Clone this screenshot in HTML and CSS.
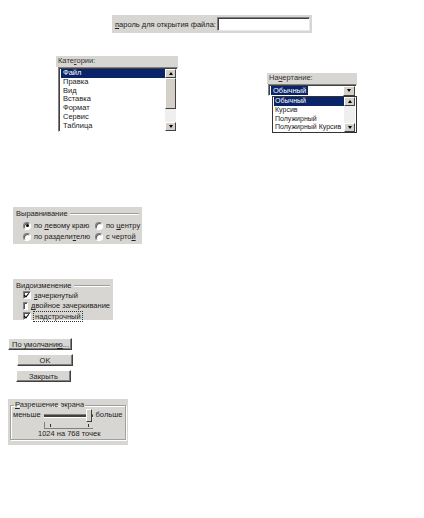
FILE: index.html
```html
<!DOCTYPE html>
<html>
<head>
    <title>Параметры</title>
    <meta charset="UTF-8">
    <link rel="stylesheet" href="styles.css">
</head>
<body>
    <!-- пароль -->
    <div class="pass-bar">
        <span class="lbl"><u>п</u>ароль для открытия файла:</span>
        <span class="field"></span>
    </div>

    <div class="lists">
        <!-- категории -->
        <div class="cat">
            <div class="cap">Кате<u>г</u>ории:</div>
            <div class="listbox">
                <ul class="items">
                    <li class="sel">Файл</li>
                    <li>Правка</li>
                    <li>Вид</li>
                    <li>Вставка</li>
                    <li>Формат</li>
                    <li>Сервис</li>
                    <li>Таблица</li>
                </ul>
                <div class="vscroll">
                    <span class="sbtn"><i class="tri up"></i></span>
                    <span class="thumb"></span>
                    <span class="track"></span>
                    <span class="sbtn"><i class="tri down"></i></span>
                </div>
            </div>
        </div>

        <!-- начертание -->
        <div class="font-style">
            <div class="cap">На<u>ч</u>ертание:</div>
            <div class="combo">
                <span class="combo-text">Обычный</span>
                <span class="sbtn combo-btn"><i class="tri down"></i></span>
            </div>
            <div class="drop">
                <ul class="items">
                    <li class="sel">Обычный</li>
                    <li>Курсив</li>
                    <li>Полужирный</li>
                    <li>Полужирный Курсив</li>
                </ul>
                <div class="vscroll">
                    <span class="sbtn"><i class="tri up"></i></span>
                    <span class="track"></span>
                    <span class="sbtn"><i class="tri down"></i></span>
                </div>
            </div>
        </div>
    </div>

    <!-- выравнивание -->
    <div class="group align">
        <div class="group-title"><span>Выравнивание</span><i class="rule"></i></div>
        <div class="radios">
            <label class="opt"><i class="radio on"></i><span>по <u>л</u>евому краю</span></label>
            <label class="opt"><i class="radio"></i><span>по <u>ц</u>ентру</span></label>
            <label class="opt"><i class="radio"></i><span>по раздели<u>т</u>елю</span></label>
            <label class="opt"><i class="radio"></i><span>с черто<u>й</u></span></label>
        </div>
    </div>

    <!-- видоизменение -->
    <div class="group effects">
        <div class="group-title"><span>Видоизменение</span><i class="rule"></i></div>
        <label class="opt"><i class="check on"></i><span><u>з</u>ачеркнутый</span></label>
        <label class="opt"><i class="check"></i><span><u>д</u>войное зачеркивание</span></label>
        <label class="opt"><i class="check on"></i><span class="focus">надстрочный</span></label>
    </div>

    <!-- кнопки -->
    <div class="buttons">
        <button class="btn btn-default">По умолчани<u>ю</u>...</button>
        <button class="btn btn-ok">OK</button>
        <button class="btn btn-close">Закрыть</button>
    </div>

    <!-- разрешение экрана -->
    <div class="res-panel">
        <fieldset class="res">
            <legend><u>Р</u>азрешение экрана</legend>
            <div class="slider-row">
                <span>меньше</span>
                <div class="slider">
                    <i class="slot"></i>
                    <i class="knob"></i>
                    <div class="ticks"><i></i><i></i></div>
                </div>
                <span>больше</span>
            </div>
            <div class="res-text">1024 на 768 точек</div>
        </fieldset>
    </div>
</body>
</html>
```

FILE: styles.css
```css
body {
    margin: 0;
    background: #fff;
    font-family: "Liberation Sans", Arial, sans-serif;
    font-size: 7.5px;
    color: #222;
    white-space: nowrap;
}

u { text-decoration: underline; }

ul {
    margin: 0;
    padding: 0;
    list-style: none;
}

/* общие детали */
.sbtn {
    display: flex;
    align-items: center;
    justify-content: center;
    box-sizing: border-box;
    width: 11px;
    height: 9px;
    background: #d4d0c8;
    border: 1px solid;
    border-color: #fff #404040 #404040 #fff;
}

.tri {
    width: 0;
    height: 0;
    border-left: 2.5px solid transparent;
    border-right: 2.5px solid transparent;
}

.tri.up { border-bottom: 3px solid #000; }
.tri.down { border-top: 3px solid #000; }

/* пароль */
.pass-bar {
    display: flex;
    align-items: center;
    margin: 15px 0 0 112px;
    width: 200px;
    height: 18px;
    background: #d8d6d2;
}

.pass-bar .lbl {
    margin-left: 3px;
    width: 102px;
}

.field {
    box-sizing: border-box;
    width: 93px;
    height: 14px;
    background: #fff;
    border: 1px solid;
    border-color: #808080 #e8e8e8 #e8e8e8 #808080;
    box-shadow: inset 1px 1px #404040;
}

/* списки */
.lists {
    display: flex;
    align-items: flex-start;
    margin-top: 23px;
}

.cap {
    height: 11px;
    line-height: 10px;
    padding-left: 2px;
    background: #d8d6d2;
    color: #333;
}

.cat {
    margin-left: 56px;
    width: 122px;
}

.listbox {
    display: flex;
    box-sizing: border-box;
    margin-left: 2px;
    width: 120px;
    height: 65px;
    background: #fff;
    border: 1px solid;
    border-color: #808080 #fff #fff #808080;
    box-shadow: inset 1px 1px #404040;
    padding: 1px 1px 0 2px;
}

.items {
    flex: 1;
    overflow: hidden;
}

.items li {
    height: 8.8px;
    line-height: 8.8px;
    padding-left: 2px;
}

.items li.sel {
    background: #0a246a;
    color: #fff;
}

.vscroll {
    display: flex;
    flex-direction: column;
    width: 11px;
    flex-shrink: 0;
}

.vscroll .track {
    flex: 1;
    background: #efefef;
}

.vscroll .thumb {
    box-sizing: border-box;
    height: 31px;
    background: #d4d0c8;
    border: 1px solid;
    border-color: #fff #404040 #404040 #fff;
}

.font-style {
    margin: 17px 0 0 89px;
    width: 90px;
}

.combo {
    display: flex;
    align-items: center;
    justify-content: space-between;
    box-sizing: border-box;
    margin-left: 1px;
    height: 12px;
    background: #fff;
    border: 1px solid;
    border-color: #808080 #fff #fff #808080;
    box-shadow: inset 1px 1px #404040;
    padding: 1px 1px 0 2px;
}

.combo-text {
    background: #0a246a;
    color: #fff;
    padding: 0 2px;
    line-height: 9px;
}

.combo-btn {
    height: 10px;
    width: 12px;
}

.drop {
    display: flex;
    box-sizing: border-box;
    margin-left: 5px;
    height: 37px;
    background: #fff;
    border: 1px solid #333;
    padding: 0 1px 0 1px;
}

.drop .items li {
    height: 8.75px;
    line-height: 8.75px;
    padding-left: 1px;
    font-size: 7px;
}

/* группы */
.group {
    box-sizing: border-box;
    margin-left: 13px;
    background: #d8d6d2;
    padding: 2px 3px 0 3px;
}

.group-title {
    display: flex;
    align-items: center;
    height: 9px;
    line-height: 9px;
}

.group-title .rule {
    flex: 1;
    margin-left: 2px;
    height: 0;
    border-top: 1px solid #a0a0a0;
    border-bottom: 1px solid #fff;
}

.opt {
    display: flex;
    align-items: center;
    height: 11px;
}

.align {
    margin-top: 74px;
    width: 129px;
    height: 37px;
}

.radios {
    display: grid;
    grid-template-columns: 72px auto;
    margin: 2px 0 0 7px;
}

.radio {
    box-sizing: border-box;
    width: 8px;
    height: 8px;
    margin-right: 3px;
    border-radius: 50%;
    background: #fff;
    border: 1px solid;
    border-color: #808080 #fff #fff #808080;
    box-shadow: inset 1px 1px #555;
    position: relative;
}

.radio.on::after {
    content: "";
    position: absolute;
    left: 1.5px;
    top: 1.5px;
    width: 3px;
    height: 3px;
    border-radius: 50%;
    background: #000;
}

.effects {
    margin-top: 35px;
    width: 100px;
    height: 41px;
}

.effects .opt {
    margin-left: 7px;
    height: 10.5px;
}

.check {
    box-sizing: border-box;
    width: 8px;
    height: 8px;
    margin-right: 3px;
    background: #fff;
    border: 1px solid;
    border-color: #808080 #fff #fff #808080;
    box-shadow: inset 1px 1px #555;
    position: relative;
}

.check.on::after {
    content: "";
    position: absolute;
    left: 1px;
    top: 0;
    width: 2px;
    height: 4px;
    border: solid #000;
    border-width: 0 1.5px 1.5px 0;
    transform: rotate(40deg);
}

.focus {
    outline: 1px dotted #333;
    padding: 0 1px;
}

/* кнопки */
.buttons {
    display: flex;
    flex-direction: column;
    align-items: flex-start;
    gap: 4px;
    margin-top: 18px;
}

.btn {
    box-sizing: border-box;
    height: 12px;
    padding: 0;
    font: inherit;
    color: #222;
    background: #d8d6d2;
    border: 1px solid;
    border-color: #fff #404040 #404040 #fff;
    box-shadow: inset -1px -1px #808080;
}

.btn-default {
    margin-left: 8px;
    width: 64px;
    text-align: left;
    padding-left: 3px;
}

.btn-ok {
    margin-left: 17px;
    width: 56px;
}

.btn-close {
    margin-left: 16px;
    width: 55px;
}

/* разрешение */
.res-panel {
    box-sizing: border-box;
    margin: 17px 0 0 8px;
    width: 120px;
    height: 46px;
    background: #d8d6d2;
    padding: 2px 2px 0 2px;
}

.res {
    margin: 0;
    padding: 0 2px;
    height: 39px;
    box-sizing: border-box;
    border: 1px solid #a0a0a0;
    box-shadow: 1px 1px #fff, inset 1px 1px #fff;
}

.res legend {
    padding: 0 1px;
    margin-left: 1px;
    line-height: 8px;
}

.slider-row {
    display: flex;
    align-items: flex-start;
    gap: 3px;
    margin-top: 1px;
}

.slider-row span {
    line-height: 10px;
}

.slider {
    position: relative;
    width: 49px;
    height: 18px;
}

.slot {
    position: absolute;
    left: 0;
    right: 0;
    top: 4px;
    height: 2px;
    border-top: 1px solid #808080;
    border-bottom: 1px solid #fff;
    background: #404040;
}

.knob {
    position: absolute;
    right: 1px;
    top: -1px;
    box-sizing: border-box;
    width: 6px;
    height: 13px;
    background: #d4d0c8;
    border: 1px solid;
    border-color: #fff #404040 #404040 #fff;
}

.ticks {
    position: absolute;
    left: 0;
    right: 0;
    top: 12px;
    height: 6px;
    border-left: 1px solid #808080;
    border-bottom: 1px solid #808080;
}

.ticks i {
    position: absolute;
    top: 2px;
    width: 1px;
    height: 3px;
    background: #333;
}

.ticks i:first-child { left: 5px; }
.ticks i:last-child { right: 4px; }

.res-text {
    margin: 1px 0 0 25px;
    line-height: 9px;
}
```
